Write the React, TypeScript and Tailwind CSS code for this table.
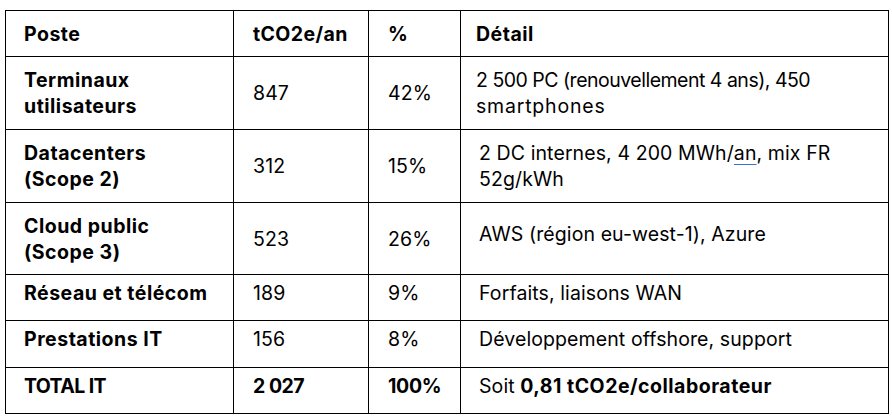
const rows = [
  {
    poste: ['Terminaux', 'utilisateurs'],
    t: '847',
    pct: '42%',
    detail: (
      <>
        <div className="tracking-[-0.5px]">2 500 PC (renouvellement 4 ans), 450</div>
        <div className="tracking-[0.8px]">smartphones</div>
      </>
    ),
    h: 'h-[73px]',
    up: false,
    dl: 'pl-[15px]',
  },
  {
    poste: ['Datacenters', '(Scope 2)'],
    t: '312',
    pct: '15%',
    detail: (
      <>
        2 DC internes, 4 200 MWh/
        <span className="underline decoration-[#3a6fd6] decoration-1 underline-offset-[4px]">an</span>, mix FR
        <br />
        52g/kWh
      </>
    ),
    h: 'h-[73px]',
    up: false,
    dl: 'pl-[18px]',
  },
  {
    poste: ['Cloud public', '(Scope 3)'],
    t: '523',
    pct: '26%',
    detail: <span className="block pb-[10px]">AWS (région eu-west-1), Azure</span>,
    h: 'h-[72px]',
    up: false,
    dl: 'pl-[18px]',
  },
  { poste: ['Réseau et télécom'], t: '189', pct: '9%', detail: <>Forfaits, liaisons WAN</>, h: 'h-[46px]', up: true, dl: 'pl-[18px]' },
  { poste: ['Prestations IT'], t: '156', pct: '8%', detail: <>Développement offshore, support</>, h: 'h-[47px]', up: true, dl: 'pl-[18px]' },
]

export default function App() {
  const cell = 'border border-black align-middle whitespace-nowrap'
  return (
    <div className="min-h-screen bg-white pl-[5px] pt-[10px] font-['Inter',sans-serif] text-[19.5px] leading-[26px] tracking-[0.1px] text-black">
      <table className="table-fixed border-collapse w-[883px]">
        <colgroup>
          <col className="w-[228px]" />
          <col className="w-[135px]" />
          <col className="w-[92px]" />
          <col className="w-[428px]" />
        </colgroup>
        <thead>
          <tr className="h-[46px] text-left">
            <th className={`${cell} pl-[18px] font-bold tracking-[0.5px]`}>Poste</th>
            <th className={`${cell} pl-[19px] font-bold tracking-[0.4px]`}>tCO2e/an</th>
            <th className={`${cell} pl-[19px] font-bold`}>%</th>
            <th className={`${cell} pl-[15px] font-bold tracking-[0.5px]`}>Détail</th>
          </tr>
        </thead>
        <tbody>
          {rows.map((r) => {
            const pad = r.up ? 'pb-[10px]' : ''
            return (
              <tr key={r.t} className={r.h}>
                <td className={`${cell} ${pad} pl-[18px] font-bold tracking-[0.5px]`}>
                  {r.poste.map((p, i) => (
                    <div key={i}>{p}</div>
                  ))}
                </td>
                <td className={`${cell} ${pad} pl-[19px]`}>{r.t}</td>
                <td className={`${cell} ${pad} pl-[19px]`}>{r.pct}</td>
                <td className={`${cell} ${pad} ${r.dl}`}>{r.detail}</td>
              </tr>
            )
          })}
          <tr className="h-[46px] font-bold">
            <td className={`${cell} pb-[10px] pl-[18px] tracking-[-0.6px]`}>TOTAL IT</td>
            <td className={`${cell} pb-[10px] pl-[19px] tracking-[-0.5px]`}>2 027</td>
            <td className={`${cell} pb-[10px] pl-[19px] tracking-[-0.3px]`}>100%</td>
            <td className={`${cell} pb-[10px] pl-[18px]`}>
              <span className="font-normal">Soit </span>
              <span className="tracking-[0.5px]">0,81 tCO2e/collaborateur</span>
            </td>
          </tr>
        </tbody>
      </table>
    </div>
  )
}
